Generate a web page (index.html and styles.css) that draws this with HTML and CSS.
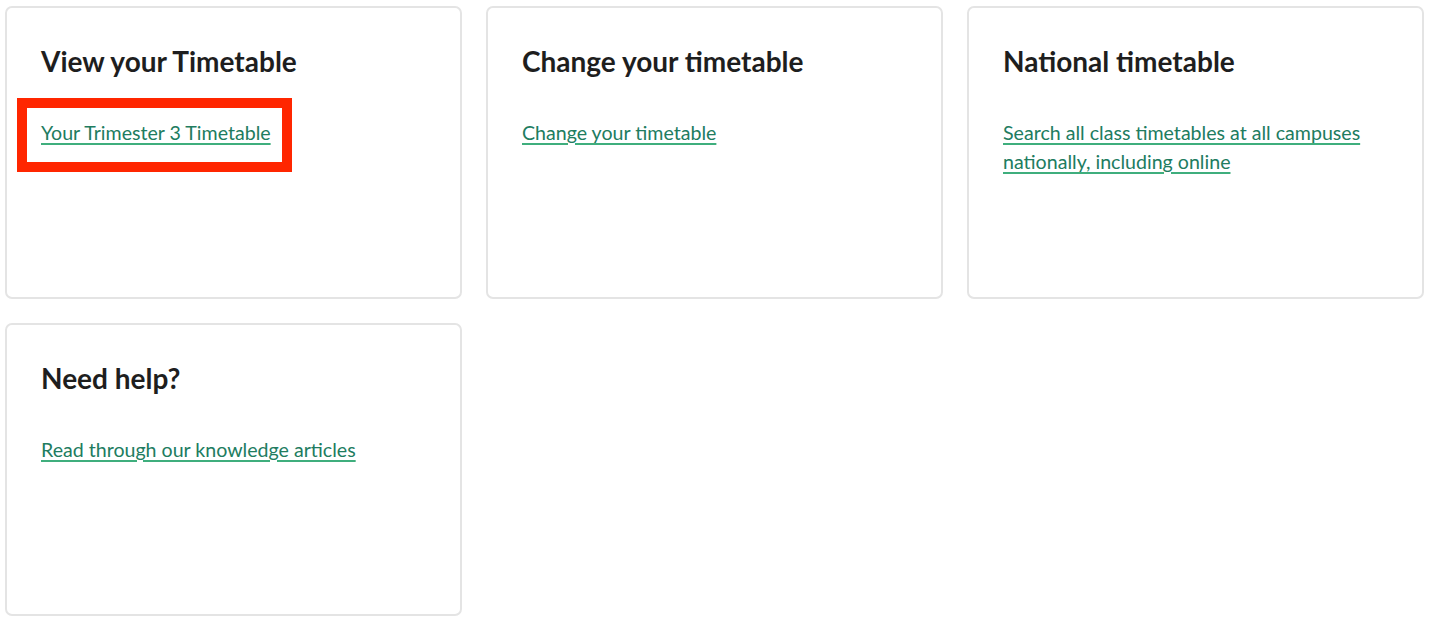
FILE: index.html
```html
<!DOCTYPE html>
<html lang="en">
<head>
<meta charset="utf-8">
<title>Timetable</title>
<link rel="stylesheet" href="styles.css">
</head>
<body>
<main class="grid">
  <section class="card">
    <h2 class="card-title">View your Timetable</h2>
    <a class="card-link" href="#">Your Trimester 3 Timetable</a>
    <div class="highlight" aria-hidden="true"></div>
  </section>
  <section class="card">
    <h2 class="card-title">Change your timetable</h2>
    <a class="card-link" href="#">Change your timetable</a>
  </section>
  <section class="card">
    <h2 class="card-title">National timetable</h2>
    <a class="card-link" href="#">Search all class timetables at all campuses nationally, including online</a>
  </section>
  <section class="card">
    <h2 class="card-title">Need help?</h2>
    <a class="card-link" href="#">Read through our knowledge articles</a>
  </section>
</main>
</body>
</html>
```

FILE: styles.css
```css
html, body {
  margin: 0;
  padding: 0;
  background: #ffffff;
}

body {
  font-family: Lato, "Noto Sans", "Liberation Sans", sans-serif;
  color: #222222;
}

.grid {
  display: grid;
  grid-template-columns: repeat(3, 457px);
  grid-auto-rows: 293px;
  column-gap: 24px;
  row-gap: 24px;
  padding: 6px 0 0 5px;
}

.card {
  position: relative;
  box-sizing: border-box;
  border: 2px solid #e4e4e4;
  border-radius: 7px;
  padding: 36px 40px 0 34px;
  display: flex;
  flex-direction: column;
  align-items: flex-start;
}

.card-title {
  margin: 0;
  font-size: 28px;
  font-weight: 700;
  line-height: 34px;
  color: #1e1e1e;
}

.card-link {
  margin-top: 40px;
  font-size: 19.6px;
  line-height: 29px;
  color: #217c5f;
  text-decoration: underline;
  text-decoration-color: #3fae7d;
  text-underline-offset: 3px;
  text-decoration-thickness: 2px;
}

.highlight {
  position: absolute;
  left: 10px;
  top: 90px;
  width: 275px;
  height: 74px;
  box-sizing: border-box;
  border: 10px solid #ff2600;
  pointer-events: none;
}
```
